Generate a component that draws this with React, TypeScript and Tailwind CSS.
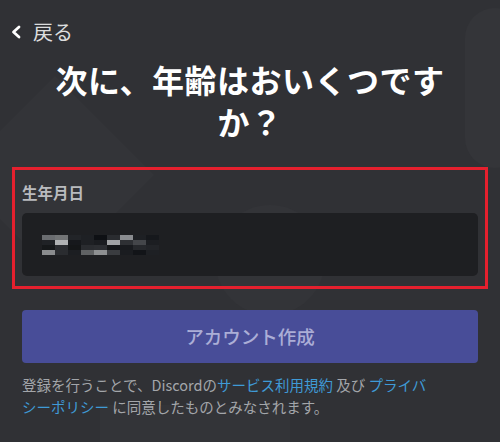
const mosaic = [
  ["#6a6c70", "#727476", "#222428", "#1e2024", "#0e1014", "#2a2c30", "#8a8c90", "#1e2024", "#16181c"],
  ["#202226", "#b0b2b4", "#16181c", "#1e2024", "#1a1c20", "#a0a2a4", "#2e3034", "#44464a", "#1c1e22"],
  ["#16181a", "#2a2c30", "#141618", "#2a2c30", "#2c2e32", "#141618", "#181a1e", "#26282c", "#222428"],
  ["#8a8c8e", "#2a2c30", "#1c1e22", "#606264", "#8e9092", "#3a3c40", "#1a1c20", "#121418", "#1e2024"],
]

export default function App() {
  return (
    <main
      className="relative w-[500px] h-[442px] overflow-hidden bg-[#303135] text-[#dcddde]"
      style={{ fontFamily: '"Noto Sans CJK JP", "Noto Sans", sans-serif' }}
    >
      {/* faint background shapes */}
      <div className="absolute left-[-15px] top-[105px] w-[140px] h-[140px] rotate-45 bg-[#333438]" />
      <div className="absolute left-[215px] top-[205px] w-[110px] h-[110px] rounded-full bg-[#333438]" />
      <div className="absolute left-[465px] top-[8px] w-[60px] h-[160px] rounded-full bg-[#343539]" />
      <div className="absolute left-[100px] top-[405px] w-[190px] h-[60px] bg-[#333438]" />

      <div className="relative flex flex-col">
        <div className="flex items-center h-[28px] mt-[18px] pl-[11px] gap-[12px]">
          <svg width="10" height="14" viewBox="0 0 10 14" fill="none">
            <polyline points="8,2 2.5,7 8,12" stroke="#ffffff" strokeWidth="2.8" strokeLinecap="round" strokeLinejoin="round" />
          </svg>
          <span className="text-[20px] leading-[28px] text-[#dcddde]">戻る</span>
        </div>

        <h1 className="mt-[12px] text-center text-[32px] leading-[42px] font-bold text-white tracking-[0.5px]">
          次に、年齢はおいくつです
          <br />
          か？
        </h1>

        <div className="mt-[25px] mx-[12px] border-[3px] border-[#e5202e] px-[7px] pt-[11px] pb-[10px]">
          <div className="text-[15.5px] leading-[22px] font-bold text-[#b9bbbe]">生年月日</div>
          <div className="mt-[10px] h-[63px] rounded-[5px] bg-[#1e1f22] flex items-center pl-[20px]">
            <div className="flex flex-col">
              {mosaic.map((row, r) => (
                <div key={r} className="flex">
                  {row.map((c, i) => (
                    <div key={i} className="w-[13px] h-[5px]" style={{ background: c }} />
                  ))}
                </div>
              ))}
            </div>
          </div>
        </div>

        <div className="mt-[21px] mx-[22px] h-[53px] rounded-[4px] bg-[#484d98] flex items-center justify-center">
          <span className="text-[18.5px] font-medium text-[#abaed6]">アカウント作成</span>
        </div>

        <p className="mt-[11px] mx-[22px] text-[14.5px] leading-[22px] text-[#a3a6aa]">
          登録を行うことで、Discordの<span className="text-[#3f9ad6]">サービス利用規約</span> 及び{" "}
          <span className="text-[#3f9ad6]">
            プライバ
            <br />
            シーポリシー
          </span>{" "}
          に同意したものとみなされます。
        </p>
      </div>
    </main>
  )
}
